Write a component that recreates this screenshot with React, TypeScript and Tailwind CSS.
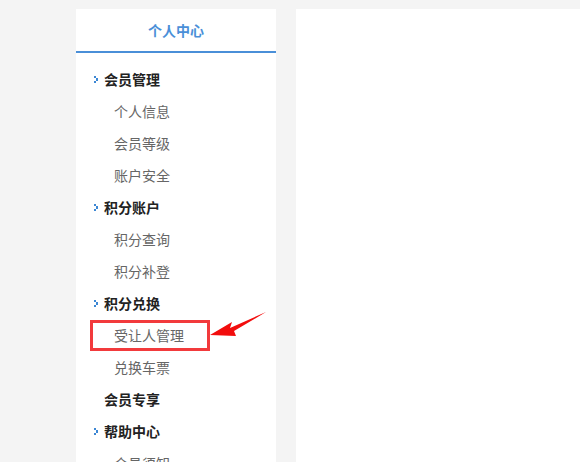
const MENU = [
  { label: "会员管理", arrow: true, children: ["个人信息", "会员等级", "账户安全"] },
  { label: "积分账户", arrow: true, children: ["积分查询", "积分补登"] },
  { label: "积分兑换", arrow: true, children: ["受让人管理", "兑换车票"] },
  { label: "会员专享", arrow: false, children: [] },
  { label: "帮助中心", arrow: true, children: ["会员须知"] },
];

function Bullet() {
  return (
    <svg width="4" height="7" viewBox="0 0 4 7" className="shrink-0">
      <rect x="0" y="0" width="2" height="2" fill="#3c87d4" />
      <rect x="2" y="2" width="2" height="3" fill="#3c87d4" />
      <rect x="0" y="5" width="2" height="2" fill="#3c87d4" />
    </svg>
  );
}

export default function App() {
  return (
    <div
      className="flex w-[580px] h-[462px] overflow-hidden bg-[#f4f4f4] pt-[9px] pl-[76px] gap-5"
      style={{ fontFamily: '"Noto Sans CJK SC", "Liberation Sans", sans-serif' }}
    >
      <aside className="w-[200px] shrink-0 bg-white flex flex-col">
        <div className="h-[44px] shrink-0 flex items-center justify-center border-b-2 border-[#4a8fd8] text-sm font-bold text-[#4a8fd8]">
          个人中心
        </div>
        <nav className="pt-[10px] flex flex-col shrink-0">
          {MENU.map((group) => (
            <div key={group.label} className="flex flex-col">
              <div className="h-8 flex items-center pl-[18px] gap-[6px] text-sm font-bold text-[#222]">
                {group.arrow ? <Bullet /> : <span className="w-1" />}
                {group.label}
              </div>
              {group.children.map((c) => (
                <div key={c} className="relative h-8 flex items-center pl-[38px] text-sm text-[#666]">
                  {c}
                  {c === "受让人管理" && (
                    <>
                      <span className="absolute left-[14px] top-[1px] w-[120px] h-[31px] border-[3px] border-[#f23a3c]" />
                      <svg
                        className="absolute left-[134px] top-[-7px]"
                        width="60"
                        height="30"
                        viewBox="0 0 60 30"
                      >
                        <polygon points="0,23 22,10 20,16 56,0 24,19 26,24" fill="#f20d0d" />
                      </svg>
                    </>
                  )}
                </div>
              ))}
            </div>
          ))}
        </nav>
      </aside>
      <main className="flex-1 bg-white" />
    </div>
  );
}
